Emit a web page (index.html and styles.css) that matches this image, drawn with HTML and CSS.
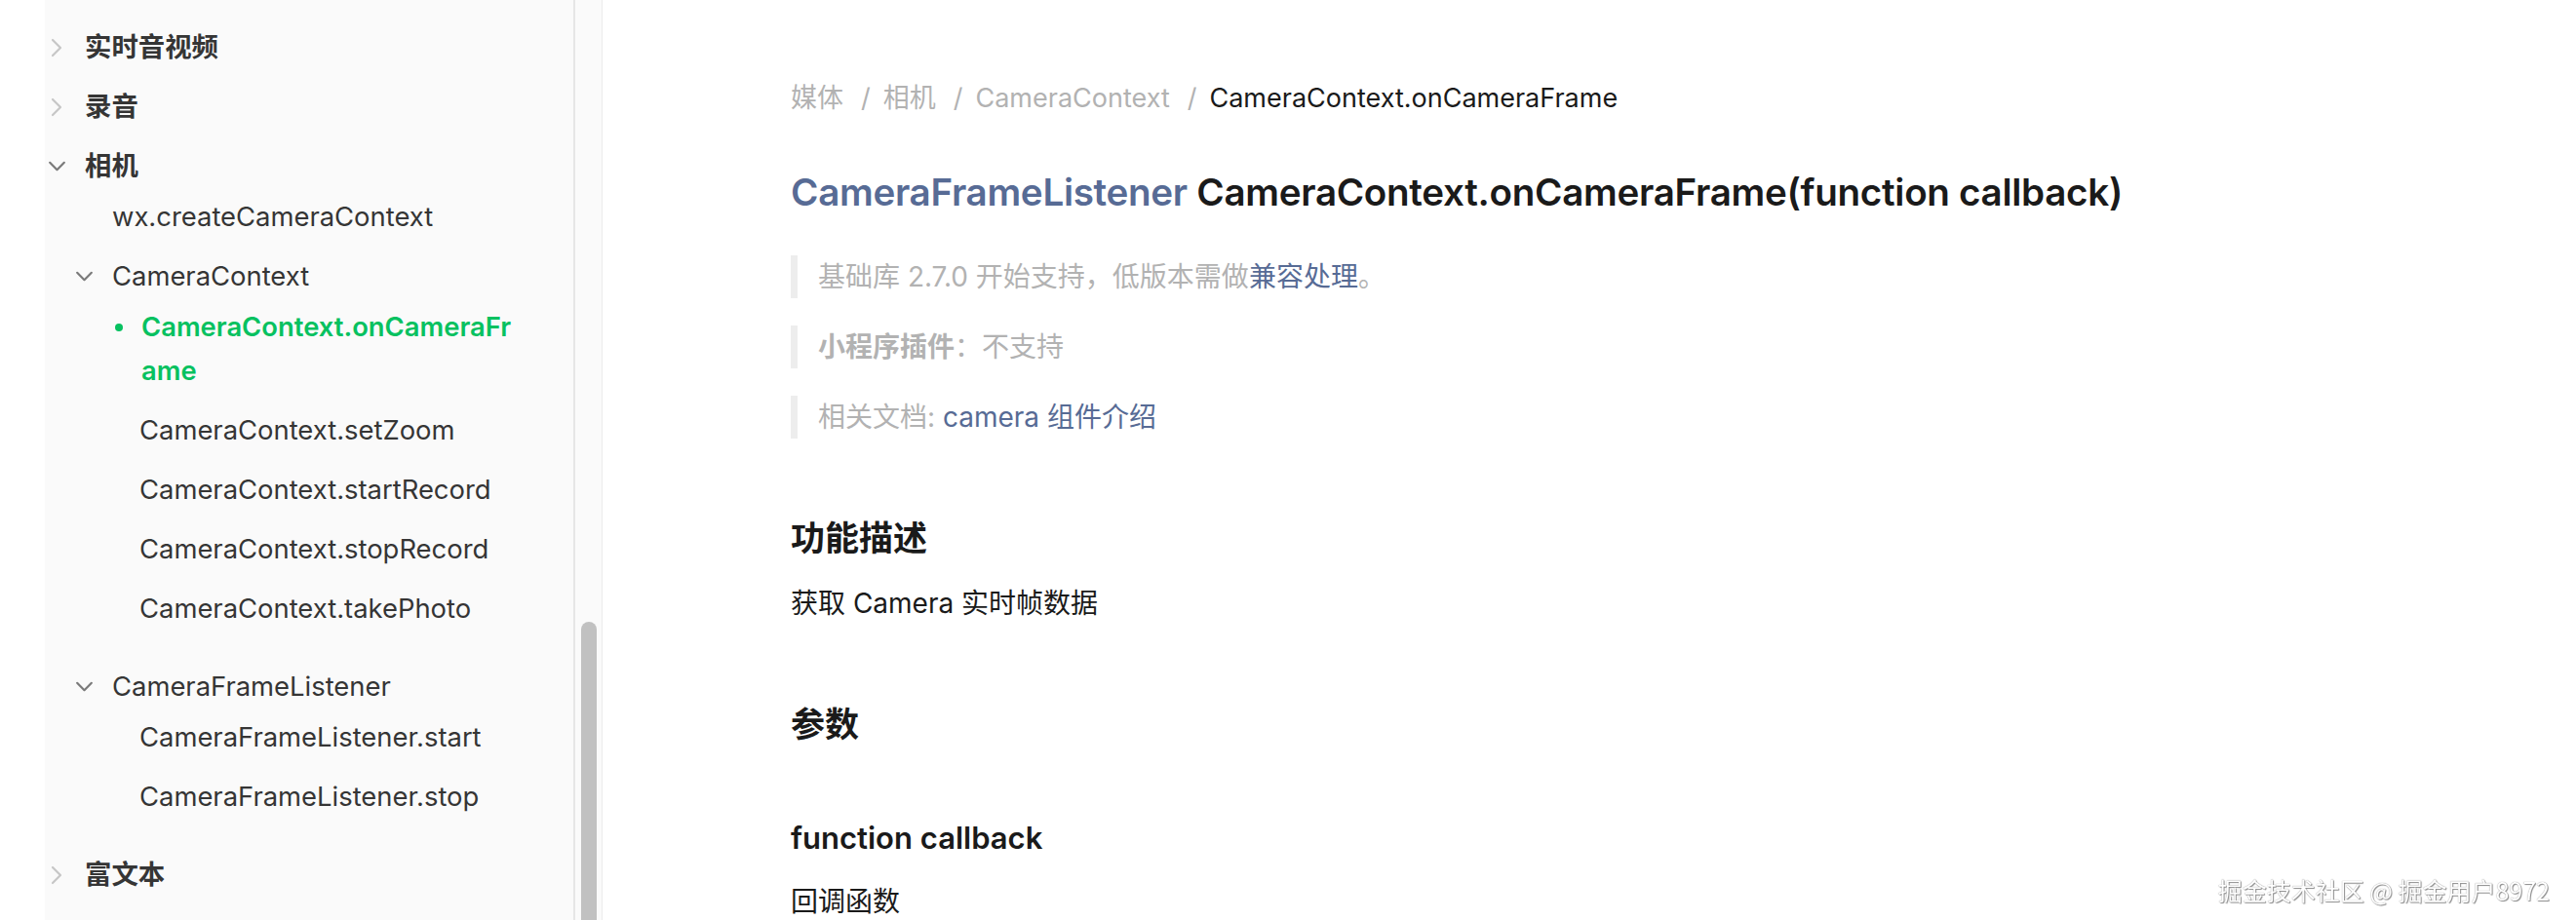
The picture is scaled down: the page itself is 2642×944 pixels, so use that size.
FILE: index.html
```html
<!DOCTYPE html>
<html lang="zh-CN">
<head>
<meta charset="utf-8">
<title>CameraContext.onCameraFrame</title>
<link rel="stylesheet" href="styles.css">
</head>
<body>
<div class="page">
  <div class="gutter"></div>
  <aside class="sidebar">
    <ul class="nav lvl1">
      <li><div class="row"><span class="ico"><svg class="chev-r" viewBox="0 0 12 20" width="12" height="20"><polyline points="2,2 10,10 2,18"/></svg></span><span class="txt">背景音频</span></div></li>
      <li><div class="row"><span class="ico"><svg class="chev-r" viewBox="0 0 12 20" width="12" height="20"><polyline points="2,2 10,10 2,18"/></svg></span><span class="txt">实时音视频</span></div></li>
      <li><div class="row"><span class="ico"><svg class="chev-r" viewBox="0 0 12 20" width="12" height="20"><polyline points="2,2 10,10 2,18"/></svg></span><span class="txt">录音</span></div></li>
      <li class="open"><div class="row"><span class="ico"><svg class="chev-d" viewBox="0 0 20 12" width="20" height="12"><polyline points="2,2 10,10 18,2"/></svg></span><span class="txt">相机</span></div>
        <ul class="nav lvl2">
          <li><div class="row"><span class="ico"></span><span class="txt">wx.createCameraContext</span></div></li>
          <li class="open"><div class="row"><span class="ico"><svg class="chev-d" viewBox="0 0 20 12" width="20" height="12"><polyline points="2,2 10,10 18,2"/></svg></span><span class="txt">CameraContext</span></div>
            <ul class="nav lvl3">
              <li class="active"><div class="row"><span class="ico"><i class="dot"></i></span><span class="txt">CameraContext.onCameraFrame</span></div></li>
              <li><div class="row"><span class="ico"></span><span class="txt">CameraContext.setZoom</span></div></li>
              <li><div class="row"><span class="ico"></span><span class="txt">CameraContext.startRecord</span></div></li>
              <li><div class="row"><span class="ico"></span><span class="txt">CameraContext.stopRecord</span></div></li>
              <li><div class="row"><span class="ico"></span><span class="txt">CameraContext.takePhoto</span></div></li>
            </ul>
          </li>
          <li class="open"><div class="row"><span class="ico"><svg class="chev-d" viewBox="0 0 20 12" width="20" height="12"><polyline points="2,2 10,10 18,2"/></svg></span><span class="txt">CameraFrameListener</span></div>
            <ul class="nav lvl3">
              <li><div class="row"><span class="ico"></span><span class="txt">CameraFrameListener.start</span></div></li>
              <li><div class="row"><span class="ico"></span><span class="txt">CameraFrameListener.stop</span></div></li>
            </ul>
          </li>
        </ul>
      </li>
      <li><div class="row"><span class="ico"><svg class="chev-r" viewBox="0 0 12 20" width="12" height="20"><polyline points="2,2 10,10 2,18"/></svg></span><span class="txt">富文本</span></div></li>
    </ul>
  </aside>
  <div class="scrolltrack"><div class="thumb"></div></div>
  <main class="content">
    <div class="breadcrumb">
      <span class="crumb">媒体</span><span class="sep">/</span><span class="crumb">相机</span><span class="sep">/</span><span class="crumb">CameraContext</span><span class="sep">/</span><span class="crumb current">CameraContext.onCameraFrame</span>
    </div>
    <h1 class="title"><span class="type">CameraFrameListener</span> CameraContext.onCameraFrame(function callback)</h1>
    <blockquote class="note">基础库 2.7.0 开始支持，低版本需做<a class="link">兼容处理</a>。</blockquote>
    <blockquote class="note"><strong>小程序插件</strong>：不支持</blockquote>
    <blockquote class="note">相关文档: <a class="link">camera 组件介绍</a></blockquote>
    <h2 class="sec">功能描述</h2>
    <p class="para">获取 Camera 实时帧数据</p>
    <h2 class="sec">参数</h2>
    <h3 class="param">function callback</h3>
    <p class="para">回调函数</p>
  </main>
</div>
<div class="watermark">掘金技术社区 @ 掘金用户8972</div>
</body>
</html>
```

FILE: styles.css
```css
* { box-sizing: border-box; }
html, body {
  margin: 0;
  padding: 0;
  height: 100%;
  overflow: hidden;
  background: #ffffff;
}
body {
  font-family: Inter, "Noto Sans CJK SC", sans-serif;
  color: #353535;
}
.page {
  display: flex;
  height: 944px;
  overflow: hidden;
}
.gutter {
  flex: 0 0 46px;
  background: #ffffff;
}
.sidebar {
  flex: 0 0 544px;
  background: #fafafa;
  border-right: 2px solid #e6e6e6;
  overflow: hidden;
}
.scrolltrack {
  flex: 0 0 28px;
  background: #fafafa;
  border-right: 1px solid #ececec;
  padding: 638px 5px 0 6px;
}
.thumb {
  height: 400px;
  background: #c1c1c1;
  border-radius: 8px 8px 0 0;
}
.nav {
  list-style: none;
  margin: 0;
  padding: 0;
}
.lvl1 { margin-top: -43px; }
.lvl2, .lvl3 {
  margin-top: -9px;
  margin-bottom: 19px;
}
.row {
  display: flex;
  align-items: flex-start;
  padding: 8px 50px 8px 2px;
  font-size: 27.4px;
  line-height: 45px;
  color: #353535;
}
.lvl1 > li > .row { font-weight: 600; }
.lvl2 > li > .row { padding-left: 30px; }
.lvl3 > li > .row { padding-left: 58px; }
.ico {
  flex: 0 0 20px;
  height: 45px;
  margin-right: 19px;
  display: flex;
  align-items: center;
  justify-content: center;
}
.ico svg { fill: none; stroke-linecap: round; stroke-linejoin: round; }
.chev-r { stroke: #c6c6c6; stroke-width: 2.2; }
.chev-d { width: 19px; height: 11px; stroke: #7a7a7a; stroke-width: 2.4; }
.txt {
  flex: 1 1 auto;
  min-width: 0;
  word-break: break-all;
}
.active .row { color: #07c160; font-weight: 600; }
.dot {
  width: 8px;
  height: 8px;
  border-radius: 50%;
  background: #07c160;
  margin-left: 14px;
}
.content {
  flex: 1 1 auto;
  padding: 81px 0 0 193px;
  font-size: 28px;
  color: #1a1a1a;
}
.breadcrumb {
  line-height: 40px;
  font-size: 27px;
  color: #b2b2b2;
}
.sep {
  display: inline-block;
  margin: 0 13px 0 18px;
}
.current { color: #1a1a1a; }
.title {
  margin: 48px 0 0;
  font-size: 38.6px;
  line-height: 56px;
  font-weight: 600;
  color: #1a1a1a;
  letter-spacing: -0.3px;
}
.type { color: #576b95; }
.note {
  margin: 28px 0 0;
  border-left: 7px solid #ededed;
  padding-left: 21px;
  line-height: 44px;
  font-size: 28px;
  color: #b2b2b2;
}
.title + .note { margin-top: 37px; }
.note strong { font-weight: 600; }
.link { color: #576b95; text-decoration: none; }
.sec {
  margin: 78px 0 0;
  font-size: 35px;
  line-height: 48px;
  font-weight: 600;
  color: #1a1a1a;
}
.para {
  margin: 21px 0 0;
  line-height: 44px;
  font-size: 28px;
  color: #1a1a1a;
}
.param {
  margin: 71px 0 0;
  font-size: 31px;
  line-height: 44px;
  font-weight: 600;
  color: #1a1a1a;
}
.watermark {
  position: fixed;
  right: 27px;
  bottom: 16px;
  font-size: 25px;
  line-height: 30px;
  font-family: "Noto Sans CJK SC", sans-serif;
  color: #ffffff;
  text-shadow: 0 0 1px #777, 1px 1px 1px rgba(0,0,0,0.45);
}
```
